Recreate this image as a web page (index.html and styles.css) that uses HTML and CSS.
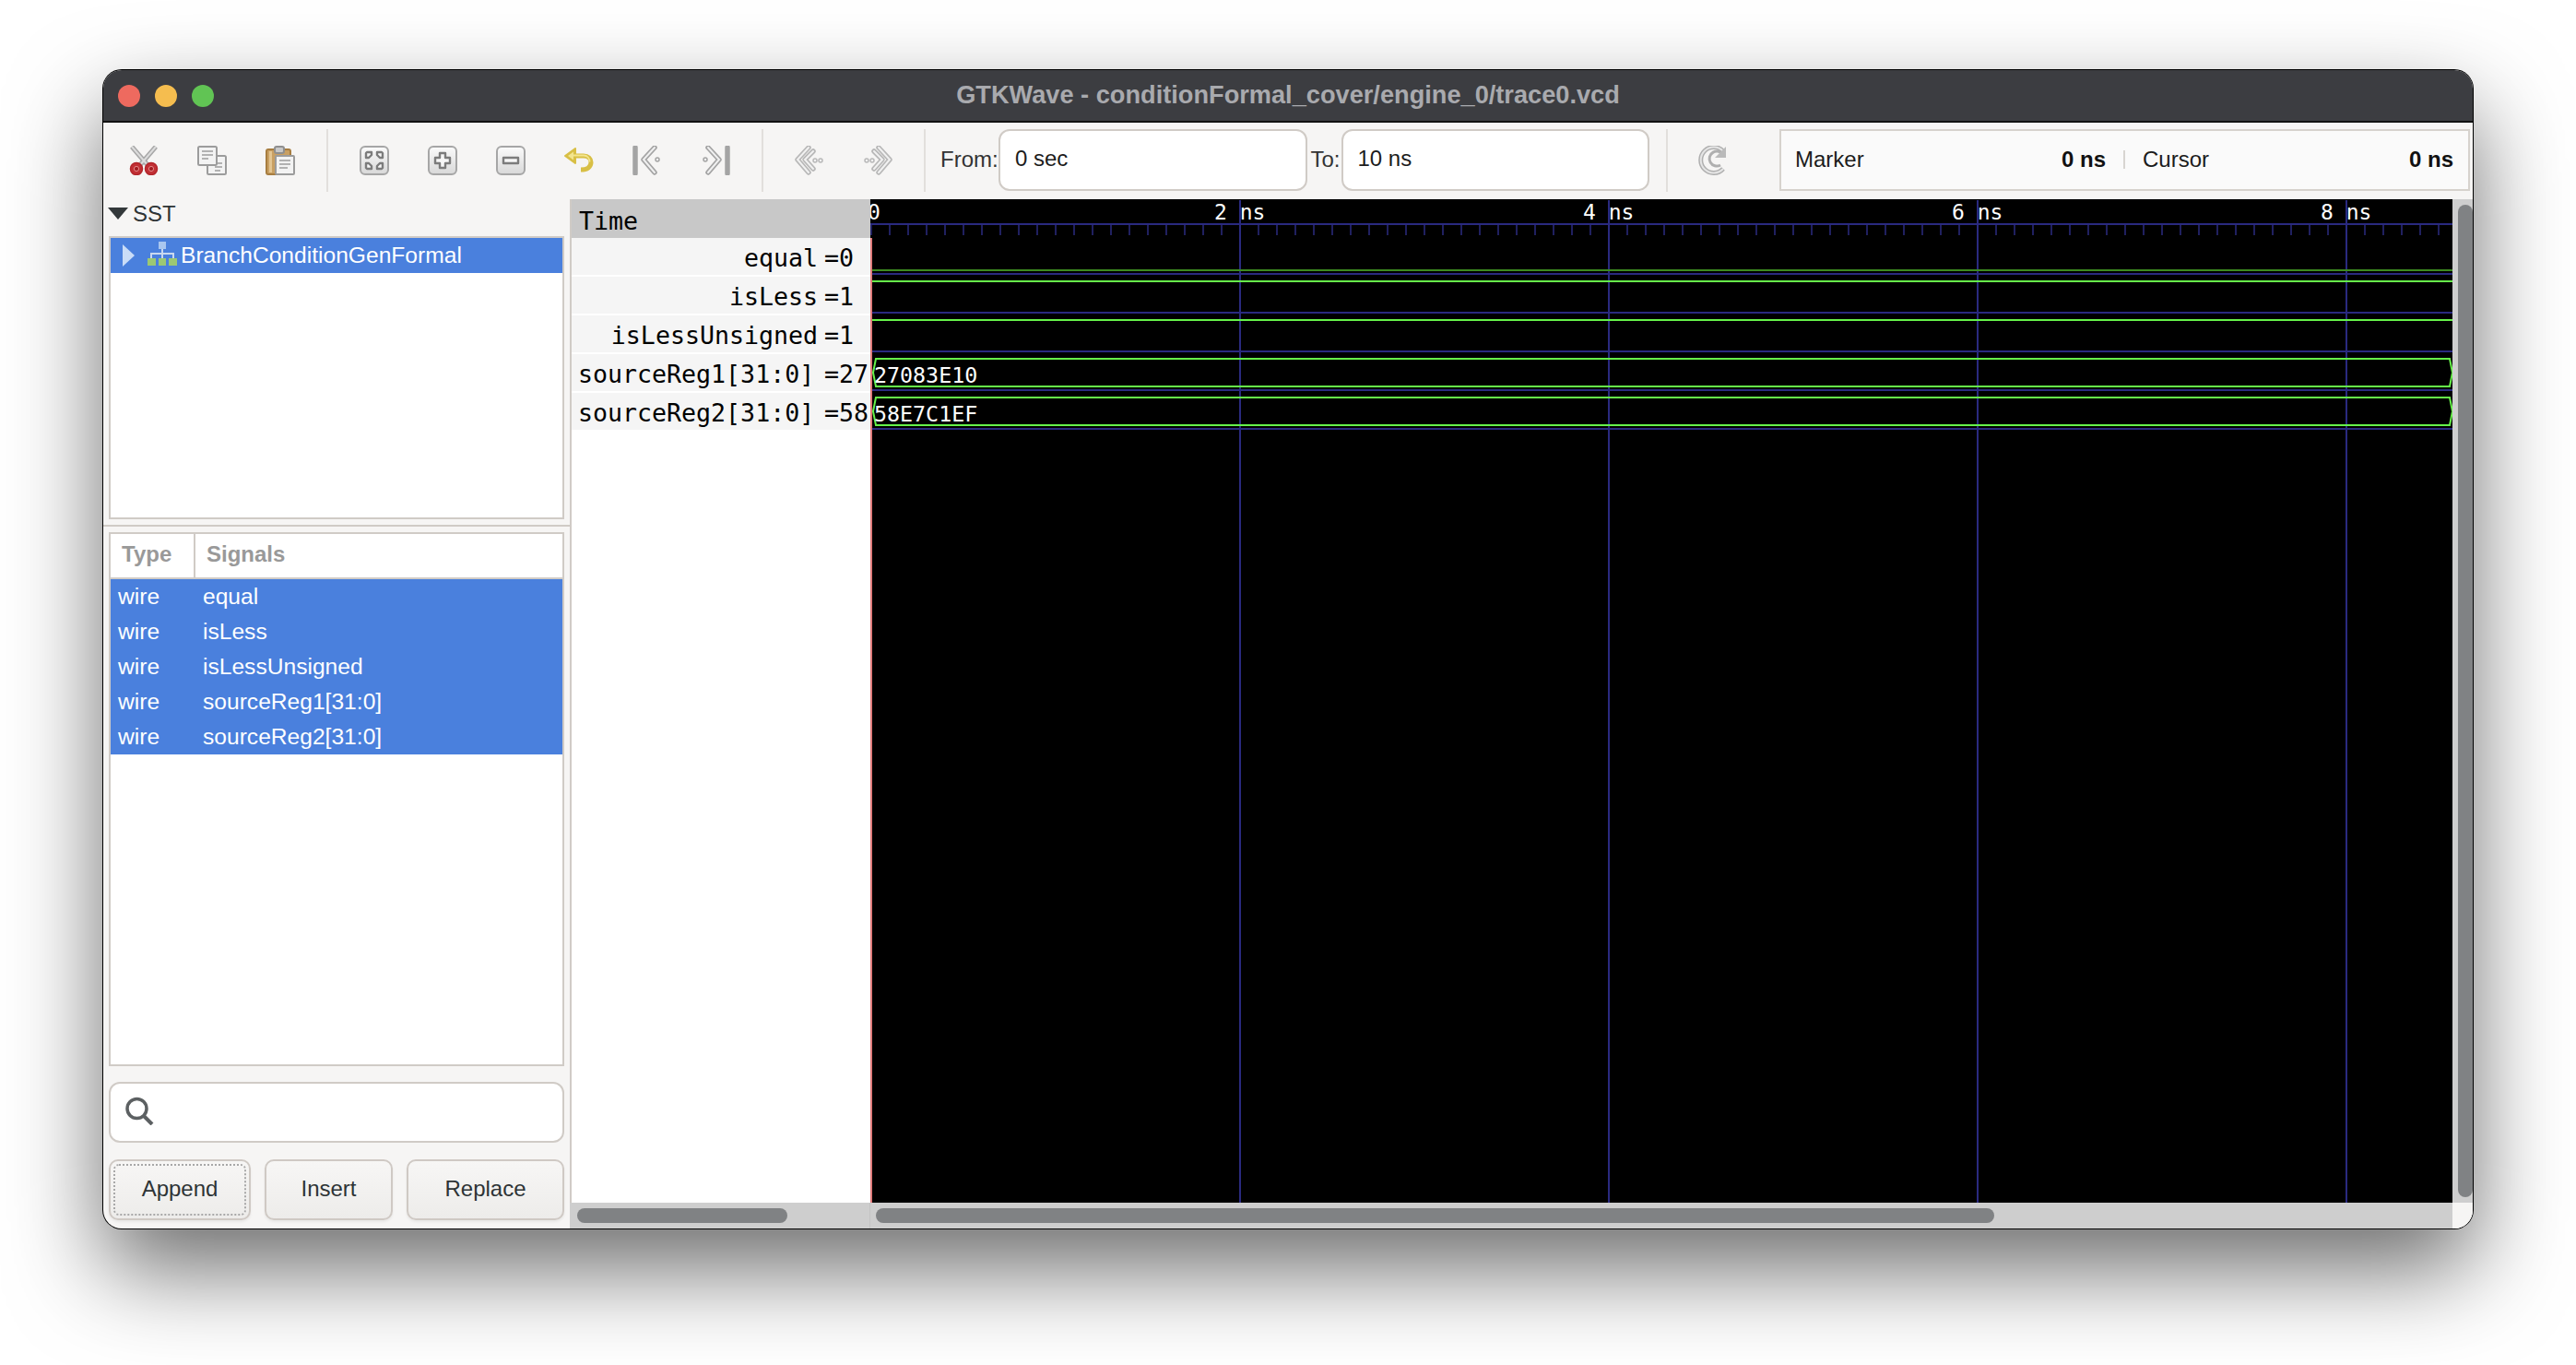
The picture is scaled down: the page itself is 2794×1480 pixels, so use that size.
FILE: index.html
```html
<!DOCTYPE html>
<html>
<head>
<meta charset="utf-8"/>
<title>GTKWave - conditionFormal_cover/engine_0/trace0.vcd</title>
<link rel="stylesheet" href="styles.css">
</head>

<body>
<div class="window">

  <div class="titlebar">
    <div class="lights">
      <span class="light red"></span>
      <span class="light yellow"></span>
      <span class="light green"></span>
    </div>
    <div class="title">GTKWave - conditionFormal_cover/engine_0/trace0.vcd</div>
  </div>

  <div class="toolbar">
    <!-- cut -->
    <div class="tool"><svg viewBox="0 0 32 32" class="icon">
      <path d="M3 1L21 22" class="blade"/><path d="M29 1L11 22" class="blade"/>
      <path d="M3 1L21 22" class="blade-in"/><path d="M29 1L11 22" class="blade-in"/>
      <circle cx="8" cy="25" r="6.5" class="grip"/><circle cx="24" cy="25" r="6.5" class="grip"/>
      <circle cx="8" cy="25" r="2.6" class="grip-eye"/><circle cx="24" cy="25" r="2.6" class="grip-eye"/>
    </svg></div>
    <!-- copy -->
    <div class="tool"><svg viewBox="0 0 32 32" class="icon">
      <rect x="11" y="11" width="20" height="20" rx="1.5" class="page"/>
      <path d="M19 19H27M19 23H27M19 27H25" class="ink"/>
      <rect x="1" y="1" width="20" height="20" rx="1.5" class="page"/>
      <path d="M5 6H17M5 10H17M5 14H12" class="ink"/>
    </svg></div>
    <!-- paste -->
    <div class="tool"><svg viewBox="0 0 32 32" class="icon">
      <rect x="1" y="4" width="26" height="27" rx="2" fill="#c9a063" stroke="#a77d3f" stroke-width="2"/>
      <rect x="4" y="6" width="3" height="23" fill="#e3c592"/>
      <rect x="10" y="1" width="10" height="7" rx="2" fill="#c8c8c8" stroke="#8f8f8f" stroke-width="2"/>
      <rect x="11" y="11" width="20" height="20" rx="1" class="page"/>
      <path d="M15 16H27M15 20H27M15 24H24" class="ink"/>
    </svg></div>
    <div class="sep"></div>
    <!-- zoom fit -->
    <div class="tool"><svg viewBox="0 0 32 32" class="icon">
      <defs><linearGradient id="key" x1="0" y1="0" x2="0" y2="1"><stop offset="0" stop-color="#fbfbfb"/><stop offset="1" stop-color="#d8d8d8"/></linearGradient></defs>
      <rect x="1" y="1" width="30" height="30" rx="5" class="key"/>
      <path d="M8 7H13V10L10 13H7V8ZM24 7H19V10L22 13H25V8ZM8 25H13V22L10 19H7V24ZM24 25H19V22L22 19H25V24Z" class="glyph"/>
    </svg></div>
    <!-- zoom in -->
    <div class="tool"><svg viewBox="0 0 32 32" class="icon">
      <rect x="1" y="1" width="30" height="30" rx="5" class="key"/>
      <path d="M13 8H19V13H24V19H19V24H13V19H8V13H13Z" class="glyph"/>
    </svg></div>
    <!-- zoom out -->
    <div class="tool"><svg viewBox="0 0 32 32" class="icon">
      <rect x="1" y="1" width="30" height="30" rx="5" class="key"/>
      <rect x="8" y="13" width="16" height="6" class="glyph"/>
    </svg></div>
    <!-- undo zoom -->
    <div class="tool"><svg viewBox="0 0 32 32" class="icon">
      <path d="M12 3L1 11L12 19Z" fill="#d8bf45" stroke="#d8bf45" stroke-width="2" stroke-linejoin="round"/>
      <path d="M10 11H21C26 11 29 14 29 18C29 23 25 26 18 26" fill="none" stroke="#d8bf45" stroke-width="5"/>
      <path d="M10 6.5L4 11L10 15.5Z" fill="#f3e58e"/>
      <path d="M10 10.5H21C25 10.5 27.5 13.5 27.5 17.5" fill="none" stroke="#f3e58e" stroke-width="1.8"/>
    </svg></div>
    <!-- to start -->
    <div class="tool"><svg viewBox="0 0 32 32" class="icon">
      <path d="M3 2V30" class="bar"/>
      <path d="M24 2L12 15L24 29" class="chev"/><path d="M24 2L12 15L24 29" class="chev-in"/>
      <circle cx="27" cy="15" r="2" class="dot"/>
    </svg></div>
    <!-- to end -->
    <div class="tool"><svg viewBox="0 0 32 32" class="icon">
      <path d="M29 2V30" class="bar"/>
      <path d="M8 2L20 15L8 29" class="chev"/><path d="M8 2L20 15L8 29" class="chev-in"/>
      <circle cx="5" cy="15" r="2" class="dot"/>
    </svg></div>
    <div class="sep"></div>
    <!-- page back -->
    <div class="tool"><svg viewBox="0 0 32 32" class="icon faint">
      <path d="M15 2L3 15L15 29" class="chev"/><path d="M15 2L3 15L15 29" class="chev-in"/>
      <path d="M20 6L11 15L20 25" class="chev"/><path d="M20 6L11 15L20 25" class="chev-in"/>
      <circle cx="22" cy="16" r="2" class="dot"/><circle cx="28" cy="16" r="2" class="dot"/>
    </svg></div>
    <!-- page forward -->
    <div class="tool"><svg viewBox="0 0 32 32" class="icon faint">
      <path d="M17 2L29 15L17 29" class="chev"/><path d="M17 2L29 15L17 29" class="chev-in"/>
      <path d="M12 6L21 15L12 25" class="chev"/><path d="M12 6L21 15L12 25" class="chev-in"/>
      <circle cx="10" cy="16" r="2" class="dot"/><circle cx="4" cy="16" r="2" class="dot"/>
    </svg></div>
    <div class="sep"></div>

    <div class="range-label from-label">From:</div>
    <div class="entry">0 sec</div>
    <div class="range-label to-label">To:</div>
    <div class="entry">10 ns</div>

    <div class="sep sep-reload"></div>
    <!-- reload -->
    <div class="tool"><svg viewBox="0 0 32 32" class="icon reload">
      <path d="M27 6A14 14 0 1 0 27 25" fill="none" stroke="#a8a8a8" stroke-width="5"/>
      <path d="M27 6A14 14 0 1 0 27 25" fill="none" stroke="#e4e4e4" stroke-width="2"/>
      <path d="M27 10A8 8 0 1 0 24 21" fill="none" stroke="#a8a8a8" stroke-width="3"/>
      <path d="M30 1V13H18Z" fill="#b4b4b4"/>
    </svg></div>

    <div class="status">
      <span class="status-name">Marker</span>
      <span class="status-val">0 ns</span>
      <span class="status-sep"></span>
      <span class="status-name cursor-name">Cursor</span>
      <span class="status-val">0 ns</span>
    </div>
  </div>

  <div class="panes">

    <div class="left">
      <div class="sst"><span class="sst-arrow"></span>SST</div>
      <div class="tree">
        <div class="tree-row">
          <span class="tree-arrow"></span>
          <svg viewBox="0 0 32 26" class="tree-icon">
            <rect x="12" y="0" width="8" height="8" fill="#a9c6ef"/>
            <path d="M16 8V14M4 18V13H28V18M16 14V18" fill="none" stroke="#c9d8ef" stroke-width="2"/>
            <rect x="0" y="18" width="9" height="8" fill="#9cc873"/>
            <rect x="12" y="18" width="8" height="8" fill="#9cc873"/>
            <rect x="23" y="18" width="9" height="8" fill="#9cc873"/>
          </svg>
          BranchConditionGenFormal
        </div>
      </div>
      <div class="pane-rule"></div>
      <div class="signals">
        <div class="sig-head">
          <div class="col-type">Type</div>
          <div class="col-name">Signals</div>
        </div>
        <div class="sig-row"><span class="sig-type">wire</span>equal</div>
        <div class="sig-row"><span class="sig-type">wire</span>isLess</div>
        <div class="sig-row"><span class="sig-type">wire</span>isLessUnsigned</div>
        <div class="sig-row"><span class="sig-type">wire</span>sourceReg1[31:0]</div>
        <div class="sig-row"><span class="sig-type">wire</span>sourceReg2[31:0]</div>
      </div>
      <div class="search">
        <svg viewBox="0 0 31 31" class="search-icon">
          <circle cx="12.5" cy="13" r="10.5" fill="none" stroke="#5c6062" stroke-width="3.5"/>
          <path d="M20 21L29 30" stroke="#5c6062" stroke-width="4"/>
        </svg>
      </div>
      <div class="buttons">
        <div class="btn btn-append"><span class="focus">Append</span></div>
        <div class="btn btn-insert">Insert</div>
        <div class="btn btn-replace">Replace</div>
      </div>
    </div>

    <div class="right">
      <div class="view">
        <div class="names">
          <div class="names-time">Time</div>
          <div class="names-row"><span class="sig-label">equal</span><span class="sig-val">=0</span></div>
          <div class="names-row"><span class="sig-label">isLess</span><span class="sig-val">=1</span></div>
          <div class="names-row"><span class="sig-label">isLessUnsigned</span><span class="sig-val">=1</span></div>
          <div class="names-row"><span class="sig-label bus">sourceReg1[31:0]</span><span class="sig-val">=27</span></div>
          <div class="names-row"><span class="sig-label bus">sourceReg2[31:0]</span><span class="sig-val">=58</span></div>
        </div>

        <svg class="wave" viewBox="0 0 1716 1088" width="1716" height="1088">
          <defs>
            <pattern id="ticks" x="0" y="28" width="20" height="11" patternUnits="userSpaceOnUse">
              <rect x="0.25" y="0" width="1.5" height="11" fill="#2a2a80"/>
            </pattern>
          </defs>
          <rect width="1716" height="1088" fill="#000"/>

          <!-- ruler -->
          <rect x="0" y="28" width="1716" height="11" fill="url(#ticks)"/>
          <path d="M0 27H1716" class="grid"/>
          <path d="M401 1V1088M801 1V1088M1201 1V1088M1601 1V1088" class="grid"/>
          <text x="-3" y="22" class="ruler">0</text>
          <text x="373" y="22" class="ruler">2 ns</text>
          <text x="773" y="22" class="ruler">4 ns</text>
          <text x="1173" y="22" class="ruler">6 ns</text>
          <text x="1573" y="22" class="ruler">8 ns</text>

          <!-- row separators -->
          <path d="M2 81H1716M2 123H1716M2 165H1716M2 207H1716M2 249H1716" class="grid"/>

          <!-- traces -->
          <path d="M2 77H1716" class="trace-low"/>
          <path d="M2 89H1716" class="trace"/>
          <path d="M2 131H1716" class="trace"/>
          <path d="M3 188L6 173H1713L1716 188L1713 203H6Z" class="trace"/>
          <path d="M3 230L6 215H1713L1716 230L1713 245H6Z" class="trace"/>
          <text x="4" y="199" class="bus-val">27083E10</text>
          <text x="4" y="241" class="bus-val">58E7C1EF</text>

          <path d="M1 42V1088" class="cursor"/>
        </svg>

        <div class="vscroll"><div class="vthumb"></div></div>
      </div>
      <div class="hscroll">
        <div class="hscroll-names"><div class="hthumb hthumb-names"></div></div>
        <div class="hscroll-wave"><div class="hthumb hthumb-wave"></div></div>
        <div class="hscroll-corner"></div>
      </div>
    </div>

  </div>
</div>
</body>
</html>
```

FILE: styles.css
```css
html, body {
   margin: 0;
   background-color: white;
}

body {
   width: 2794px;
   height: 1480px;
   padding: 76px 0 0 112px;
   box-sizing: border-box;
   overflow: hidden;
   font-family: "Liberation Sans", Arial, sans-serif;
   font-size: 24px;
   color: #1c1c1c;
}

.window {
   width: 2570px;
   height: 1256px;
   display: flex;
   flex-direction: column;
   border-radius: 20px;
   overflow: hidden;
   background-color: #f6f5f4;
   box-shadow: 0 0 0 1px #000, 0 44px 100px 0 rgba(0, 0, 0, 0.58);
}

/* title bar */

.titlebar {
   height: 57px;
   flex: none;
   box-sizing: border-box;
   display: flex;
   align-items: center;
   position: relative;
   background-color: #3c3d41;
   border-bottom: 2px solid #111;
}

.lights {
   display: flex;
   gap: 16px;
   padding-left: 16px;
}

.light {
   width: 24px;
   height: 24px;
   border-radius: 50%;
}

.red { background-color: #ee6a5f; }
.yellow { background-color: #f5bd4f; }
.green { background-color: #61c454; }

.title {
   position: absolute;
   left: 0;
   right: 0;
   top: 12px;
   text-align: center;
   font-size: 27.2px;
   line-height: 30px;
   font-weight: bold;
   color: #a9aaae;
}

/* toolbar */

.toolbar {
   height: 83px;
   flex: none;
   box-sizing: border-box;
   display: flex;
   align-items: center;
   padding: 0 0 2px 7px;
}

.tool {
   width: 74px;
   flex: none;
   display: flex;
   justify-content: center;
}

.icon {
   width: 32px;
   height: 32px;
   display: block;
   filter: blur(0.5px);
}

.icon.faint { opacity: 0.75; }
.icon.reload { opacity: 0.9; }

.blade { stroke: #a6a6a6; stroke-width: 5; fill: none; }
.blade-in { stroke: #dcdcdc; stroke-width: 2; fill: none; }
.grip { fill: #c23035; stroke: #b3262b; stroke-width: 1.5; }
.grip-eye { fill: #a11c20; stroke: #e58a8a; stroke-width: 1; }
.page { fill: #f3f3f3; stroke: #9c9c9c; stroke-width: 2; }
.ink { stroke: #b2b2b2; stroke-width: 2; fill: none; }
.key { fill: url(#key); stroke: #a6a6a6; stroke-width: 2; }
.glyph { fill: #f6f6f6; stroke: #7c7c7c; stroke-width: 2.4; stroke-linejoin: round; }
.bar { stroke: #a4a4a4; stroke-width: 5.5; stroke-linecap: round; fill: none; }
.chev { stroke: #a4a4a4; stroke-width: 5.5; stroke-linecap: round; stroke-linejoin: round; fill: none; }
.chev-in { stroke: #f0f0f0; stroke-width: 2; stroke-linecap: round; fill: none; }
.dot { fill: #f0f0f0; stroke: #a4a4a4; stroke-width: 1.5; }

.sep {
   width: 2px;
   height: 68px;
   flex: none;
   margin: 0 13px;
   background-color: #e2dfdc;
}

.sep-reload {
   margin: 0 12px 0 18px;
}

.range-label {
   flex: none;
   padding-bottom: 2px;
   color: #333;
}

.from-label {
   width: 63px;
   margin-left: 3px;
}

.to-label {
   width: 33px;
   margin-left: 4px;
}

.entry {
   width: 334.500px;
   height: 67px;
   flex: none;
   box-sizing: border-box;
   padding-left: 16px;
   line-height: 60px;
   background-color: white;
   border: 2px solid #d0cbc6;
   border-radius: 12px;
}

.status {
   width: 749px;
   height: 67px;
   flex: none;
   margin-left: 35px;
   box-sizing: border-box;
   display: flex;
   align-items: center;
   padding: 0 16px 2px 15px;
   background-color: #fafafa;
   border: 2px solid #d6d2cd;
}

.status-name {
   width: 74px;
}

.status-val {
   flex: 1;
   text-align: right;
   font-weight: bold;
   color: #111;
}

.status-sep {
   width: 2px;
   height: 20px;
   flex: none;
   margin: 0 19px 0 19px;
   background-color: #d8d5d1;
}

/* panes */

.panes {
   flex: 1;
   display: flex;
   min-height: 0;
}

.left {
   width: 506px;
   flex: none;
   display: flex;
   flex-direction: column;
}

.sst {
   height: 40px;
   flex: none;
   display: flex;
   align-items: center;
   gap: 5px;
   padding-left: 5px;
   padding-bottom: 9px;
   box-sizing: border-box;
   color: #2e3436;
}

.sst-arrow {
   width: 0;
   height: 0;
   border-left: 11px solid transparent;
   border-right: 11px solid transparent;
   border-top: 13px solid #33383a;
}

.tree {
   height: 307px;
   flex: none;
   margin: 0 6px;
   box-sizing: border-box;
   background-color: white;
   border: 2px solid #d0cbc6;
}

.tree-row {
   height: 38px;
   display: flex;
   align-items: center;
   font-size: 24.6px;
   color: white;
   background-color: #4a80dd;
}

.tree-arrow {
   width: 0;
   height: 0;
   margin-left: 13px;
   border-top: 12px solid transparent;
   border-bottom: 12px solid transparent;
   border-left: 13px solid #c9dcf7;
}

.tree-icon {
   width: 32px;
   height: 26px;
   margin: -4px 4px 0 14px;
}

.pane-rule {
   height: 2px;
   flex: none;
   margin-top: 6px;
   background-color: #d0cbc6;
}

.signals {
   height: 579px;
   flex: none;
   margin: 6px 6px 0;
   box-sizing: border-box;
   background-color: white;
   border: 2px solid #d0cbc6;
}

.sig-head {
   height: 49px;
   box-sizing: border-box;
   display: flex;
   font-weight: bold;
   color: #999;
   border-bottom: 2px solid #d0cbc6;
}

.col-type {
   width: 92px;
   box-sizing: border-box;
   padding-left: 12px;
   line-height: 44px;
   border-right: 2px solid #d0cbc6;
}

.col-name {
   padding-left: 12px;
   line-height: 44px;
}

.sig-row {
   height: 38px;
   line-height: 37px;
   font-size: 24.6px;
   color: white;
   background-color: #4a80dd;
}

.sig-type {
   display: inline-block;
   width: 100px;
   padding-left: 8px;
   box-sizing: border-box;
}

.search {
   height: 66px;
   flex: none;
   margin: 17px 6px 0;
   box-sizing: border-box;
   display: flex;
   align-items: center;
   padding-left: 16px;
   background-color: white;
   border: 2px solid #d0cbc6;
   border-radius: 12px;
}

.search-icon {
   width: 31px;
   height: 31px;
   margin-top: -3px;
}

.buttons {
   display: flex;
   gap: 15px;
   margin: 18px 6px 0;
}

.btn {
   height: 66px;
   box-sizing: border-box;
   display: flex;
   align-items: center;
   justify-content: center;
   padding: 3px 3px 6px;
   color: #2e3436;
   background: linear-gradient(#f7f6f5, #edecea);
   border: 2px solid #cfc9c4;
   border-radius: 10px;
   box-shadow: 0 2px 3px rgba(0, 0, 0, 0.06);
}

.btn-append { width: 154px; padding: 3px; }
.btn-insert { width: 139px; }
.btn-replace { width: 171px; }

.focus {
   width: 100%;
   height: 100%;
   display: flex;
   align-items: center;
   justify-content: center;
   padding-bottom: 3px;
   border: 2px dotted #a8a8a8;
   border-radius: 6px;
   box-sizing: border-box;
}

/* signal names and waves */

.right {
   flex: 1;
   min-width: 0;
   display: flex;
   flex-direction: column;
}

.view {
   height: 1088px;
   flex: none;
   display: flex;
}

.names {
   width: 326px;
   flex: none;
   background-color: white;
   font-family: "DejaVu Sans Mono", monospace;
   font-size: 26.6px;
   color: #000;
   overflow: hidden;
   border-left: 2px solid #d0cbc6;
   box-sizing: border-box;
}

.names-time {
   height: 42px;
   margin-left: -2px;
   line-height: 48px;
   padding-left: 10px;
   background-color: #c8c8c8;
}

.names-row {
   height: 40px;
   margin-bottom: 2px;
   display: flex;
   line-height: 43px;
   white-space: nowrap;
   background-color: #f5f5f5;
}

.sig-label {
   width: 260px;
   margin-left: 7px;
   flex: none;
   text-align: right;
}

.sig-label.bus {
   text-align: left;
}

.sig-val {
   margin-left: 7px;
}

.wave {
   display: block;
   flex: none;
}

.grid { stroke: #2a2a80; stroke-width: 2; fill: none; }
.trace { stroke: #66f24a; stroke-width: 2; fill: none; }
.trace-low { stroke: #3c8a20; stroke-width: 2; fill: none; }
.cursor { stroke: #e07a7a; stroke-width: 2; fill: none; }

.ruler, .bus-val {
   font-family: "DejaVu Sans Mono", monospace;
   font-size: 23px;
   fill: white;
}

.bus-val {
   font-size: 23.3px;
}

.vscroll {
   width: 22px;
   flex: none;
   box-sizing: border-box;
   padding: 6px 0 6px 6px;
   background-color: #cecece;
}

.vthumb {
   height: 100%;
   background-color: #808284;
   border-radius: 8px;
}

.hscroll {
   flex: 1;
   display: flex;
   background-color: #cecece;
}

.hscroll-names {
   width: 326px;
   flex: none;
   box-sizing: border-box;
   padding: 6px 0 0 8px;
   border-right: 1px solid #c4c4c4;
}

.hscroll-wave {
   width: 1716px;
   flex: none;
   box-sizing: border-box;
   padding: 6px 0 0 6px;
}

.hscroll-corner {
   flex: 1;
   background-color: #f6f5f4;
}

.hthumb {
   height: 16px;
   background-color: #808284;
   border-radius: 8px;
}

.hthumb-names { width: 228px; }
.hthumb-wave { width: 1213px; }
```
